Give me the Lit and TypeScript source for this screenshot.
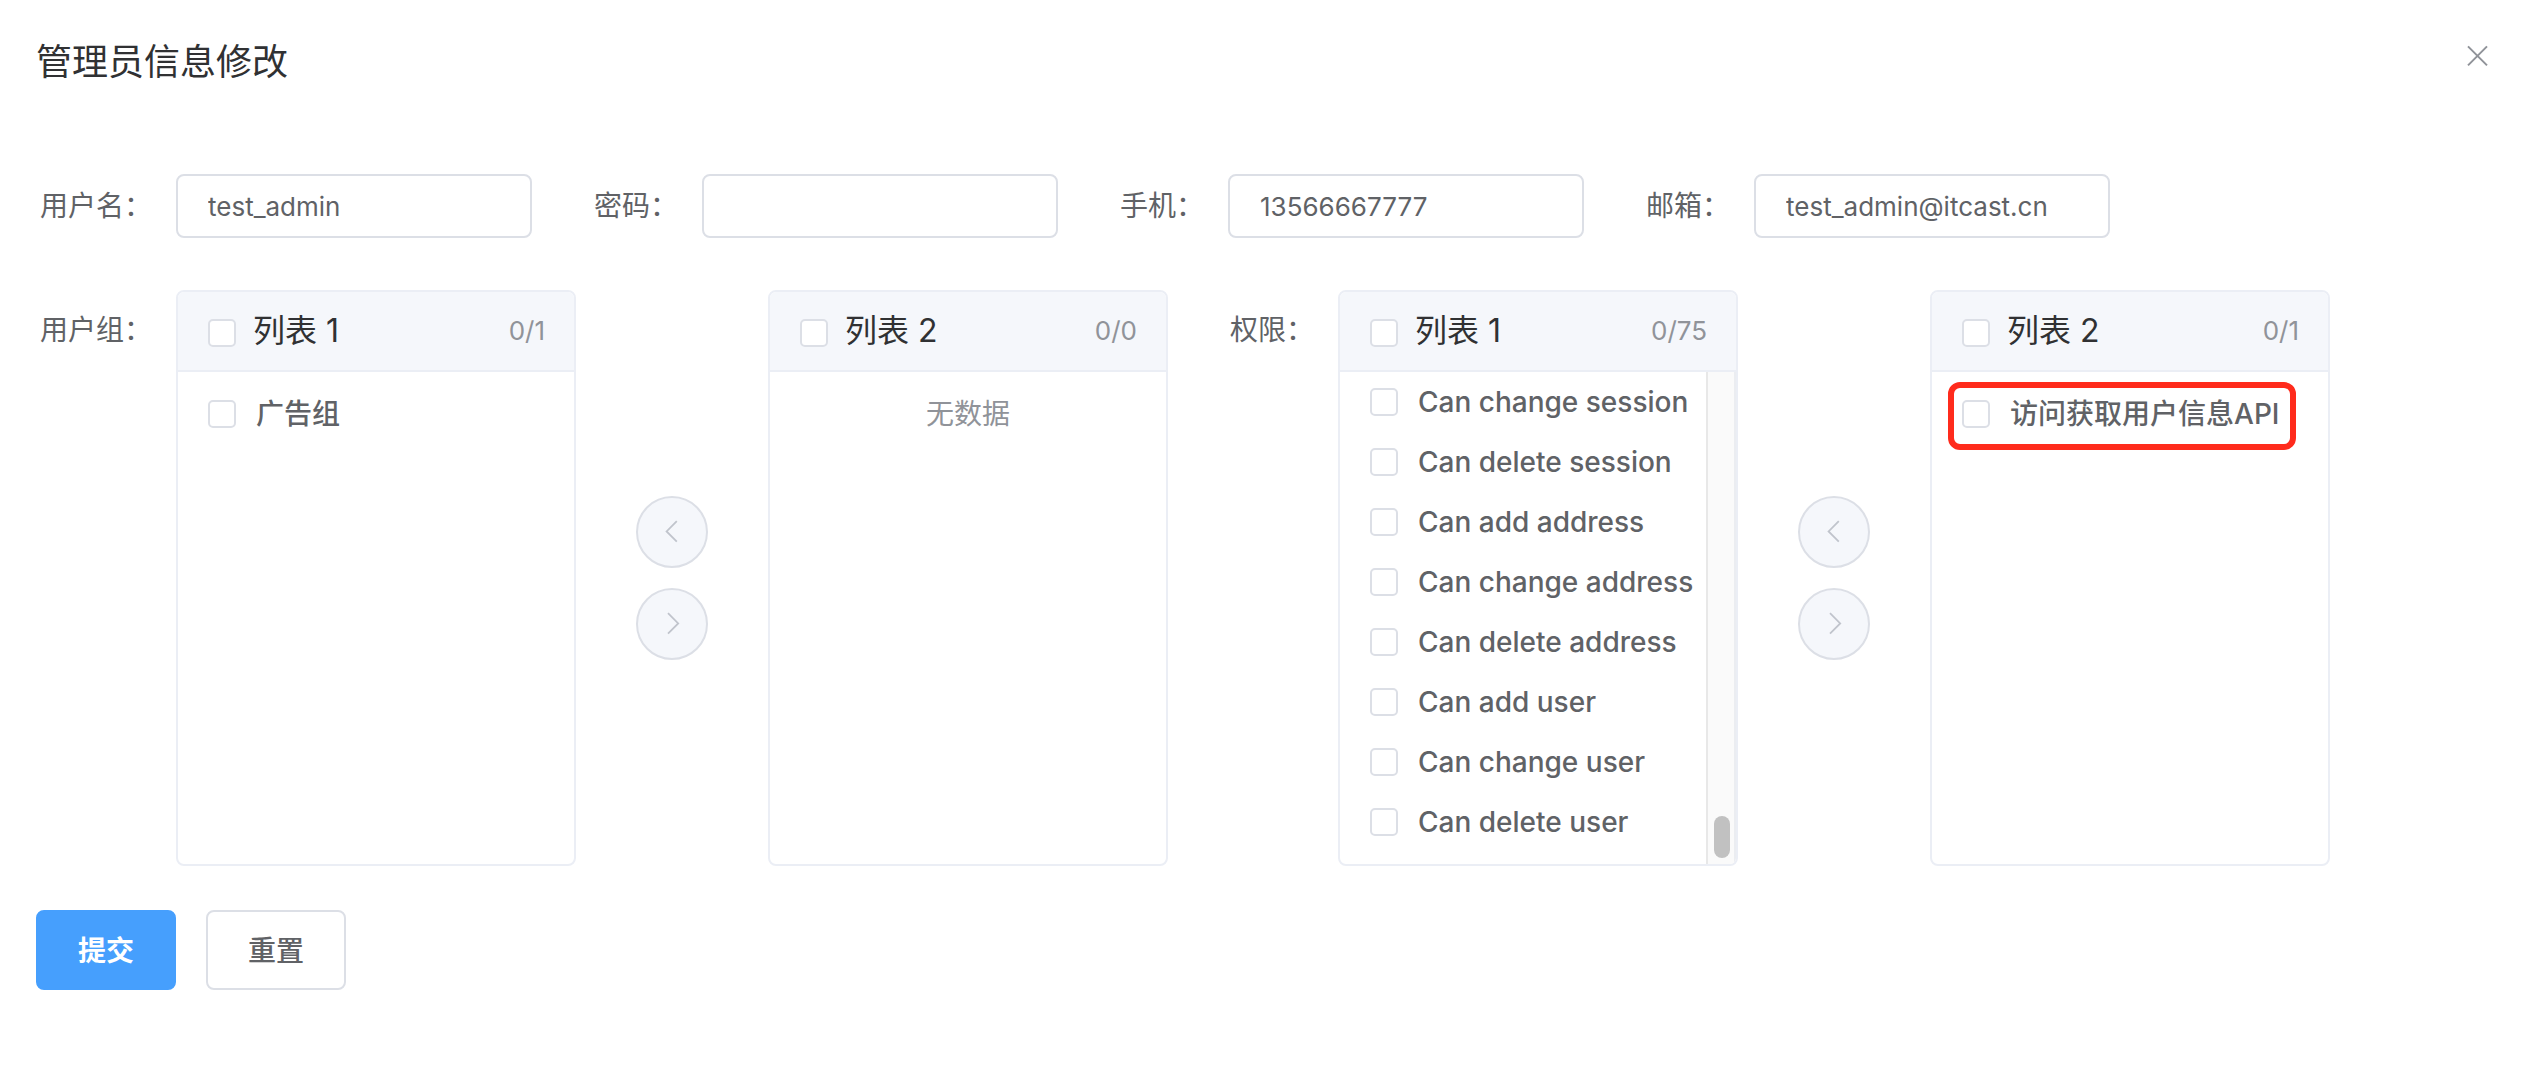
import { LitElement, css, html, nothing } from "lit";
import { customElement, property } from "lit/decorators.js";

interface Option {
  label: string;
  marked?: boolean;
}

interface ListData {
  title: string;
  count: string;
  options: Option[];
  scrolled?: boolean;
}

const fields = [
  { id: "username", label: "用户名：", type: "text", value: "test_admin" },
  { id: "password", label: "密码：", type: "password", value: "" },
  { id: "mobile", label: "手机：", type: "tel", value: "13566667777" },
  { id: "email", label: "邮箱：", type: "email", value: "test_admin@itcast.cn" },
];

const groupLists: ListData[] = [
  { title: "列表 1", count: "0/1", options: [{ label: "广告组" }] },
  { title: "列表 2", count: "0/0", options: [] },
];

const permissionLists: ListData[] = [
  {
    title: "列表 1",
    count: "0/75",
    scrolled: true,
    options: [
      { label: "Can change session" },
      { label: "Can delete session" },
      { label: "Can add address" },
      { label: "Can change address" },
      { label: "Can delete address" },
      { label: "Can add user" },
      { label: "Can change user" },
      { label: "Can delete user" },
    ],
  },
  {
    title: "列表 2",
    count: "0/1",
    options: [{ label: "访问获取用户信息API", marked: true }],
  },
];

const checkboxStyles = css`
  .check {
    appearance: none;
    box-sizing: border-box;
    flex: none;
    width: 28px;
    height: 28px;
    margin: 0;
    border: 2px solid #dcdfe6;
    border-radius: 5px;
    background: #fff;
  }
  .check:checked {
    border-color: #469ffd;
    background: #469ffd;
  }
`;

@customElement("transfer-list")
export class TransferList extends LitElement {
  @property({ attribute: false }) data!: ListData;

  static styles = [
    checkboxStyles,
    css`
      :host {
        display: flex;
        flex-direction: column;
        box-sizing: border-box;
        width: 400px;
        overflow: hidden;
        border: 2px solid #ebeef5;
        border-radius: 8px;
        background: #fff;
      }
      .head {
        display: flex;
        align-items: center;
        justify-content: space-between;
        padding: 0 29px 0 30px;
        border-bottom: 2px solid #ebeef5;
        background: #f5f7fb;
      }
      .all {
        display: flex;
        align-items: center;
        gap: 17px;
        padding-top: 4px;
        color: #303133;
        font-size: 32px;
        line-height: 74px;
      }
      .title {
        padding-bottom: 4px;
        line-height: 70px;
      }
      .count {
        color: #909399;
        font-size: 26px;
        line-height: 78px;
      }
      .body {
        display: flex;
        min-height: 492px;
      }
      .options {
        flex: 1;
        min-width: 0;
        margin: 0;
        padding: 12px 0;
        list-style: none;
      }
      .scrolled {
        padding-top: 0;
      }
      .option {
        position: relative;
        height: 60px;
        padding-left: 30px;
      }
      .choice {
        display: flex;
        align-items: center;
        gap: 20px;
        color: #606266;
        font-size: 28px;
        font-weight: 500;
        line-height: 60px;
        white-space: nowrap;
      }
      .mark {
        position: absolute;
        inset: -2px 32px -6px 16px;
        border: 6px solid #ff2b1c;
        border-radius: 12px;
        pointer-events: none;
      }
      .empty {
        flex: 1;
        margin: 0;
        padding-top: 12px;
        color: #909399;
        font-size: 28px;
        line-height: 60px;
        text-align: center;
      }
      .track {
        display: flex;
        align-items: flex-end;
        justify-content: center;
        box-sizing: border-box;
        width: 30px;
        padding: 0 0 6px 2px;
        border: solid #e8e8e8;
        border-width: 0 2px;
        border-right-color: #ebedf1;
        background: #fafafa;
      }
      .thumb {
        width: 16px;
        height: 42px;
        border-radius: 8px;
        background: #c1c1c1;
      }
    `,
  ];

  private renderBody() {
    const { options, scrolled } = this.data;
    if (!options.length) return html`<p class="empty">无数据</p>`;
    return html`
      <ul class="options ${scrolled ? "scrolled" : ""}">
        ${options.map(
          (option) => html`
            <li class="option">
              <label class="choice">
                <input class="check" type="checkbox" />
                <span>${option.label}</span>
              </label>
              ${option.marked ? html`<div class="mark"></div>` : nothing}
            </li>
          `
        )}
      </ul>
      ${scrolled ? html`<div class="track"><div class="thumb"></div></div>` : nothing}
    `;
  }

  render() {
    return html`
      <div class="head">
        <label class="all">
          <input class="check" type="checkbox" />
          <span class="title">${this.data.title}</span>
        </label>
        <span class="count">${this.data.count}</span>
      </div>
      <div class="body">${this.renderBody()}</div>
    `;
  }
}

@customElement("transfer-box")
export class TransferBox extends LitElement {
  @property({ attribute: false }) lists!: ListData[];

  static styles = css`
    :host {
      display: flex;
      align-items: center;
    }
    .moves {
      display: flex;
      flex-direction: column;
      gap: 20px;
      padding: 0 60px;
    }
    .move {
      display: flex;
      align-items: center;
      justify-content: center;
      box-sizing: border-box;
      width: 72px;
      height: 72px;
      padding: 0;
      border: 2px solid #dcdfe6;
      border-radius: 50%;
      background: #f5f7fb;
      cursor: not-allowed;
    }
    .arrow {
      width: 28px;
      height: 28px;
      fill: none;
      stroke: #c0c4cc;
      stroke-width: 1.8;
    }
  `;

  render() {
    return html`
      <transfer-list .data=${this.lists[0]}></transfer-list>
      <div class="moves">
        <button class="move" type="button" disabled aria-label="移到左侧">
          <svg class="arrow" viewBox="0 0 28 28"><path d="M18.8 3.2 8.6 13.4 18.8 23.6" /></svg>
        </button>
        <button class="move" type="button" disabled aria-label="移到右侧">
          <svg class="arrow" viewBox="0 0 28 28"><path d="M10 3.2 20.2 13.4 10 23.6" /></svg>
        </button>
      </div>
      <transfer-list .data=${this.lists[1]}></transfer-list>
    `;
  }
}

@customElement("app-root")
export class AppRoot extends LitElement {
  static styles = css`
    :host {
      display: block;
      background: #fff;
      color: #606266;
      font-family: Inter, "Noto Sans CJK SC", sans-serif;
    }
    .header {
      display: flex;
      align-items: flex-start;
      justify-content: space-between;
      padding: 40px 36px 90px;
    }
    .title {
      margin: 0;
      color: #303133;
      font-size: 36px;
      font-weight: 400;
      line-height: 44px;
    }
    .close {
      display: flex;
      align-items: center;
      justify-content: center;
      width: 36px;
      height: 32px;
      padding: 0;
      border: 0;
      background: none;
      cursor: pointer;
    }
    .cross {
      width: 32px;
      height: 32px;
      fill: none;
      stroke: #909399;
      stroke-width: 2;
    }
    .form {
      padding: 0 36px;
    }
    .row {
      display: flex;
      flex-wrap: wrap;
      gap: 52px 62px;
      padding: 0 4px;
      margin-bottom: 52px;
    }
    .lists {
      margin-bottom: 44px;
    }
    .item {
      display: flex;
    }
    .label {
      padding-right: 24px;
      font-size: 28px;
      line-height: 64px;
      white-space: nowrap;
    }
    .lists .label {
      line-height: 80px;
    }
    .input {
      box-sizing: border-box;
      width: 356px;
      height: 64px;
      padding: 0 30px;
      border: 2px solid #dcdfe6;
      border-radius: 8px;
      outline: none;
      background: #fff;
      color: #606266;
      font-family: inherit;
      font-size: 26px;
    }
    .actions {
      display: flex;
      gap: 30px;
      padding-bottom: 100px;
    }
    .button {
      box-sizing: border-box;
      min-width: 140px;
      height: 80px;
      padding: 0 40px 2px;
      border: 2px solid #dcdfe6;
      border-radius: 8px;
      background: #fff;
      color: #606266;
      font-family: inherit;
      font-size: 28px;
      font-weight: 500;
      cursor: pointer;
    }
    .primary {
      border-color: #469ffd;
      background: #469ffd;
      color: #fff;
      font-weight: 600;
    }
  `;

  render() {
    return html`
      <header class="header">
        <h1 class="title">管理员信息修改</h1>
        <button class="close" type="button" aria-label="关闭">
          <svg class="cross" viewBox="0 0 32 32"><path d="M6 6.4 25 25.4M25 6.4 6 25.4" /></svg>
        </button>
      </header>
      <form class="form">
        <div class="row">
          ${fields.map(
            (field) => html`
              <div class="item">
                <label class="label" for=${field.id}>${field.label}</label>
                <input
                  class="input"
                  id=${field.id}
                  type=${field.type}
                  autocomplete="off"
                  .value=${field.value}
                />
              </div>
            `
          )}
        </div>
        <div class="row lists">
          <div class="item" role="group" aria-labelledby="groups">
            <span class="label" id="groups">用户组：</span>
            <transfer-box .lists=${groupLists}></transfer-box>
          </div>
          <div class="item" role="group" aria-labelledby="permissions">
            <span class="label" id="permissions">权限：</span>
            <transfer-box .lists=${permissionLists}></transfer-box>
          </div>
        </div>
        <div class="actions">
          <button class="button primary" type="button">提交</button>
          <button class="button" type="reset">重置</button>
        </div>
      </form>
    `;
  }
}
